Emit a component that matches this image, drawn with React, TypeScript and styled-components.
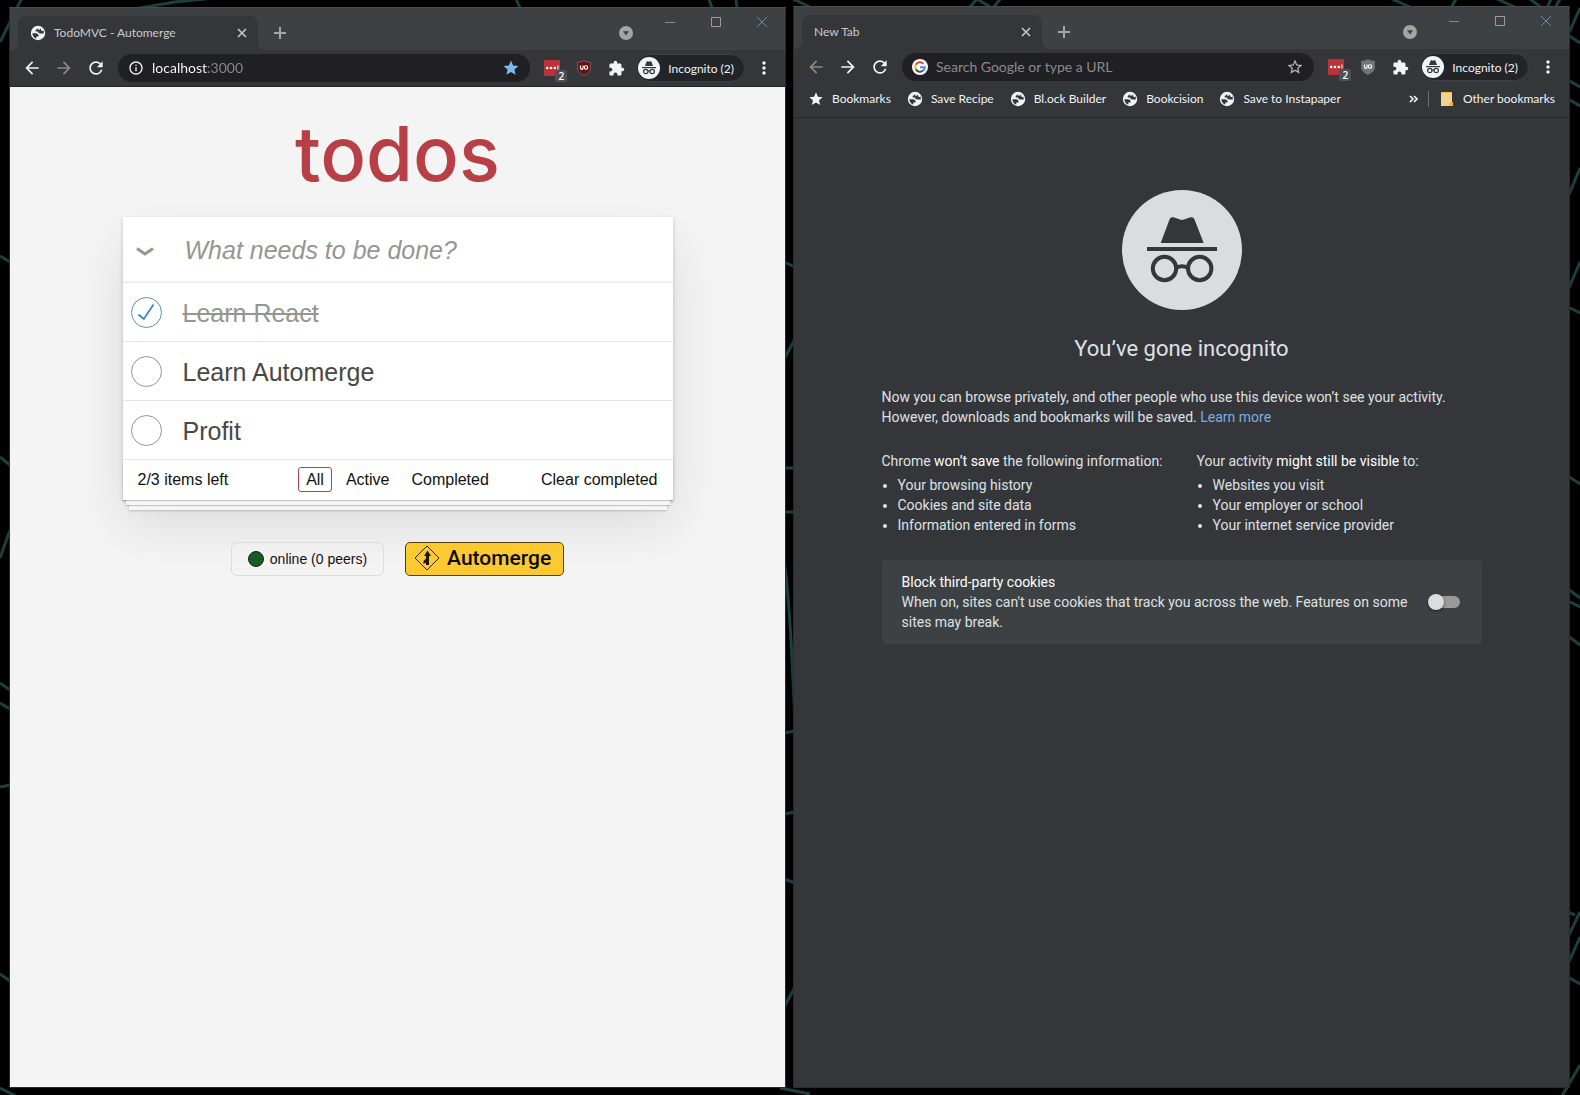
import React, { useState } from "react";
import styled, { createGlobalStyle, css } from "styled-components";
import {
  MdArrowBack,
  MdArrowForward,
  MdExtension,
  MdInfoOutline,
  MdMoreVert,
  MdRefresh,
  MdStar,
  MdStarBorder,
} from "react-icons/md";

const ui = `Lato, "Open Sans", sans-serif`;
const helvetica = `"Liberation Sans", Arial, sans-serif`;
const roboto = `Roboto, "Liberation Sans", sans-serif`;

const color = {
  strip: "#3d4144",
  bar: "#35363a",
  field: "#202024",
  chromeText: "#f1f3f4",
  red: "#b83f45",
  line: "#e6e6e6",
};

const GlobalStyle = createGlobalStyle`
  *, *::before, *::after { box-sizing: border-box; }
  body { margin: 0; background: #000; }
  button { border: 0; padding: 0; background: none; color: inherit; font: inherit; cursor: pointer; }
  h1, h2, p, ul { margin: 0; padding: 0; }
  a { color: inherit; text-decoration: none; }
`;

/* ---------- desktop and windows ---------- */

const Desktop = styled.div`
  position: relative;
  display: grid;
  grid-template-columns: 1fr 1fr;
  gap: 7px;
  min-height: 100vh;
  padding: 6px 10px 7px 9px;
  overflow: hidden;
`;

const Wallpaper = styled.svg`
  position: absolute;
  inset: 0;
  width: 100%;
  height: 100%;
  fill: none;
  stroke: #1d403f;
  stroke-width: 3;
`;

const Window = styled.section<{ $lowered?: boolean }>`
  position: relative;
  display: flex;
  flex-direction: column;
  min-width: 0;
  margin-top: ${(p) => (p.$lowered ? 1 : 0)}px;
  border: 1px solid #2a2a2c;
  border-top-color: #4b4b4b;
  background: ${color.bar};
  color: ${color.chromeText};
  font-family: ${ui};
  font-size: 12px;
`;

const TabStrip = styled.header`
  display: flex;
  align-items: flex-end;
  height: 42px;
  padding-left: 8px;
  background: ${color.strip};
`;

const Tab = styled.div`
  position: relative;
  display: flex;
  align-items: center;
  gap: 8px;
  width: 240px;
  height: 34px;
  padding: 0 8px 0 12px;
  border-radius: 8px 8px 0 0;
  background: ${color.bar};
  color: #c9ccd1;

  &::before,
  &::after {
    content: "";
    position: absolute;
    bottom: 0;
    width: 8px;
    height: 8px;
  }
  &::before {
    right: 100%;
    background: radial-gradient(circle at 0 0, transparent 8px, ${color.bar} 8px);
  }
  &::after {
    left: 100%;
    background: radial-gradient(circle at 100% 0, transparent 8px, ${color.bar} 8px);
  }
`;

const TabTitle = styled.span`
  flex: 1;
  padding-bottom: 1px;
`;

const TabClose = styled.button`
  display: grid;
  place-items: center;
  width: 16px;
  height: 16px;
`;

const StripButton = styled.button`
  display: grid;
  place-items: center;
  width: 28px;
  height: 34px;
  margin: 0 7px 0 8px;
  color: #a3a5a3;
`;

const Spacer = styled.div`
  flex: 1;
`;

const WindowControls = styled.div`
  display: flex;
  align-self: flex-start;
`;

const ControlButton = styled.button`
  display: grid;
  place-items: center;
  width: 46px;
  height: 28px;
`;

const Toolbar = styled.div<{ $ruled?: boolean }>`
  display: flex;
  align-items: center;
  height: ${(p) => (p.$ruled ? 37 : 36)}px;
  padding: 0 7px 0 6px;
  border-bottom: ${(p) => (p.$ruled ? "1px solid #242427" : "0")};
`;

const ToolButton = styled.button<{ $dim?: boolean }>`
  position: relative;
  display: grid;
  flex: none;
  place-items: center;
  width: 32px;
  height: 28px;
  color: ${(p) => (p.$dim ? "#8d8883" : color.chromeText)};
`;

const Omnibox = styled.label`
  display: flex;
  flex: 1;
  align-items: center;
  gap: 8px;
  height: 28px;
  min-width: 0;
  margin: 0 6px;
  padding: 0 10px;
  border-radius: 14px;
  background: ${color.field};
`;

const Address = styled.input<{ $hostWidth?: number }>`
  flex: 1;
  min-width: 0;
  height: 20px;
  padding: 0;
  border: 0;
  outline: 0;
  background: none;
  color: #fff;
  font: 14px/20px ${ui};

  &::placeholder {
    color: #8d8b89;
    opacity: 1;
  }

  ${(p) =>
    p.$hostWidth &&
    css`
      background: linear-gradient(90deg, #fff ${p.$hostWidth}px, #8d8b89 ${p.$hostWidth}px);
      background-clip: text;
      -webkit-text-fill-color: transparent;
    `}
`;

const FieldButton = styled.button<{ $on?: boolean }>`
  display: grid;
  place-items: center;
  color: ${(p) => (p.$on ? "#7db9ec" : "#b9babc")};
`;

const Badge = styled.span`
  position: absolute;
  right: 1px;
  bottom: 0;
  width: 12px;
  height: 12px;
  border-radius: 2px;
  background: #4d5057;
  color: #fff;
  font: 600 10px/12px "Open Sans", sans-serif;
  text-align: center;
`;

const Profile = styled.button`
  display: flex;
  flex: none;
  align-items: center;
  gap: 8px;
  height: 28px;
  margin: 0 5px 0 4px;
  padding: 0 10px 0 1px;
  border: 1px solid #3e3f42;
  border-radius: 14px;
  background: #232428;
  white-space: nowrap;
`;

const MenuButton = styled(ToolButton)`
  width: 28px;
`;

const BookmarkBar = styled.nav`
  display: flex;
  align-items: center;
  gap: 16px;
  height: 33px;
  padding: 0 14px 5px;
  border-bottom: 1px solid #28282b;
  white-space: nowrap;
`;

const Bookmark = styled.a`
  display: flex;
  align-items: center;
  gap: 8px;
`;

const BarEnd = styled.div`
  display: flex;
  align-items: center;
  gap: 10px;
  margin-left: auto;
`;

const Divider = styled.span`
  width: 1px;
  height: 16px;
  background: #6d6e71;
`;

/* ---------- todo page ---------- */

const TodoPage = styled.main`
  flex: 1;
  padding: 26px 16px 32px;
  background: #f4f4f4;
  color: #111;
  font-family: ${helvetica};
`;

const TodoTitle = styled.h1`
  margin-bottom: 24px;
  color: ${color.red};
  font-family: Inter, ${helvetica};
  font-size: 76px;
  font-weight: 500;
  line-height: 80px;
  text-align: center;
`;

const TodoCard = styled.section`
  max-width: 550px;
  margin: 0 auto;
  background: #fff;
  box-shadow: 0 2px 4px rgba(0, 0, 0, 0.2), 0 25px 50px rgba(0, 0, 0, 0.1);
`;

const rowText = css`
  font-family: ${helvetica};
  font-size: 25px;
  line-height: 30px;
`;

const NewTodo = styled.div`
  display: grid;
  grid-template-columns: 45px 1fr;
  align-items: center;
  height: 65px;
  box-shadow: inset 0 -2px 1px rgba(0, 0, 0, 0.03);
`;

const ToggleAll = styled.button`
  display: grid;
  place-items: center;
  height: 60px;
  padding-top: 4px;
`;

const NewTodoInput = styled.input`
  ${rowText}
  width: 100%;
  height: 64px;
  padding: 2px 17px 0;
  border: 0;
  outline: 0;
  background: none;

  &::placeholder {
    color: #969691;
    font-style: italic;
    opacity: 1;
  }
`;

const TodoList = styled.ul`
  list-style: none;
`;

const TodoItem = styled.li<{ $done: boolean }>`
  border-top: 1px solid ${color.line};
  color: ${(p) => (p.$done ? "#969691" : "#484844")};
  text-decoration: ${(p) => (p.$done ? "line-through" : "none")};
`;

const TodoLabel = styled.label`
  ${rowText}
  display: grid;
  grid-template-columns: 47px 1fr;
  align-items: center;
  height: 58px;
`;

const Tick = styled.span`
  display: grid;
  place-items: center;

  > * {
    grid-area: 1 / 1;
  }
`;

const TickBox = styled.input`
  appearance: none;
  width: 31px;
  height: 31px;
  margin: 0;
  border: 1px solid #949494;
  border-radius: 50%;

  &:checked {
    border-color: #5b8fb9;
  }
`;

const TodoText = styled.span`
  padding: 2px 13px 0;
`;

const TodoFooter = styled.footer`
  display: grid;
  grid-template-columns: 1fr auto 1fr;
  align-items: center;
  height: 41px;
  padding: 0 15px 2px;
  border-top: 1px solid ${color.line};
  font-size: 16px;
  line-height: 19px;
  box-shadow: 0 1px 1px rgba(0, 0, 0, 0.2), 0 8px 0 -3px #f6f6f6,
    0 9px 1px -3px rgba(0, 0, 0, 0.2), 0 16px 0 -6px #f6f6f6,
    0 17px 2px -6px rgba(0, 0, 0, 0.2);
`;

const Filters = styled.ul`
  display: flex;
  gap: 6px;
  list-style: none;
`;

const FilterLink = styled.a<{ $current: boolean }>`
  display: block;
  padding: 2px 7px;
  border: 1px solid ${(p) => (p.$current ? color.red : "transparent")};
  border-radius: 3px;
`;

const ClearButton = styled.button`
  justify-self: end;
`;

const StatusRow = styled.div`
  display: flex;
  justify-content: center;
  gap: 21px;
  margin-top: 42px;
`;

const Peers = styled.div`
  display: flex;
  align-items: center;
  gap: 6px;
  height: 34px;
  padding: 0 16px;
  border: 1px solid #dcdcdc;
  border-radius: 6px;
  font-size: 14px;
`;

const Dot = styled.span`
  width: 16px;
  height: 16px;
  border: 1px solid #0d2512;
  border-radius: 50%;
  background: #1a5a27;
`;

const AutomergeLink = styled.a`
  display: flex;
  align-items: center;
  gap: 7px;
  height: 34px;
  padding: 0 12px 2px 8px;
  border: 1px solid #53400f;
  border-radius: 5px;
  background: #fdc930;
  color: #0c0a05;
  font: 500 21px/30px ${roboto};
`;

/* ---------- incognito page ---------- */

const IncognitoPage = styled.main`
  flex: 1;
  padding: 72px 24px 32px;
  background: #35363a;
  color: #dfe1e5;
  font: 14px/20px ${roboto};
`;

const IncognitoBody = styled.div`
  display: flex;
  flex-direction: column;
  max-width: 600px;
  margin: 0 auto;
`;

const HeroIcon = styled.svg`
  align-self: center;
  width: 120px;
  height: 120px;
`;

const IncognitoTitle = styled.h1`
  margin: 25px 0 24px;
  font-size: 22px;
  font-weight: 400;
  line-height: 28px;
  text-align: center;
`;

const LearnMore = styled.a`
  color: #7ab0e6;
`;

const Columns = styled.div`
  display: flex;
  flex-wrap: wrap;
  gap: 16px 34px;
  margin: 24px 0 25px;
`;

const Strong = styled.em`
  color: #fff;
  font-style: normal;
`;

const Facts = styled.ul`
  margin-top: 4px;
  padding-left: 16px;
`;

const CookieCard = styled.label`
  display: flex;
  align-items: center;
  gap: 16px;
  padding: 12px 22px 12px 20px;
  border-radius: 4px;
  background: #3d4144;
`;

const CookieText = styled.span`
  display: block;
  flex: 1;
`;

const CookieTitle = styled.span`
  display: block;
  color: #fff;
`;

const Switch = styled.input`
  appearance: none;
  display: flex;
  flex: none;
  align-items: center;
  width: 32px;
  height: 12px;
  margin: 0;
  border-radius: 6px;
  background: linear-gradient(#9a9b98, #9a9b98) right / 28px 12px no-repeat;

  &::before {
    content: "";
    width: 16px;
    height: 16px;
    border-radius: 50%;
    background: #dadce0;
    box-shadow: 0 1px 3px rgba(0, 0, 0, 0.5);
  }
  &:checked::before {
    margin-left: auto;
  }
`;

/* ---------- drawings ---------- */

const GlobeIcon = () => (
  <svg width="16" height="16" viewBox="0 0 16 16" aria-hidden="true">
    <circle cx="8" cy="8" r="7.200" fill="#f1f3f4" />
    <path
      d="M2.300 8.300H5.500c2.300 0 3.300 1.100 3.100 3.300H6.300v2l-1.400-.6A6 6 0 0 1 2.300 8.300z"
      fill="#35363a"
    />
    <path
      d="M8.300 2.200 7.600 4C6.200 4 5.400 5 5.700 6.600h2.500c0 1.200.7 1.900 2.100 1.900h3.500A5.900 5.900 0 0 0 11.500 3.200L10 3.500 9.600 5 8 4.600z"
      fill="#35363a"
    />
    <path d="M9.500 2.300c.3 1.300 1.500 1.200 1.500 2.400s1.200 1.200 2.500 1.400l-.5-1.800-1.500-1.600z" fill="#f1f3f4" />
  </svg>
);

const CloseIcon = () => (
  <svg width="10" height="10" viewBox="0 0 10 10" stroke="#c6c8cb" strokeWidth="1.600" aria-hidden="true">
    <path d="M1 1l8 8M9 1l-8 8" />
  </svg>
);

const GoogleIcon = () => (
  <svg width="16" height="16" viewBox="0 0 16 16" fill="none" strokeWidth="2" aria-hidden="true">
    <circle cx="8" cy="8" r="8" fill="#fff" />
    <path d="M11.400 4.700A4.800 4.800 0 0 0 3.800 5.700" stroke="#dc4437" />
    <path d="M3.800 5.700a4.800 4.800 0 0 0 0 4.600" stroke="#f2b61d" />
    <path d="M3.800 10.300a4.800 4.800 0 0 0 7.300 1.300" stroke="#3f5560" />
    <path d="M8 8.200h4.800a4.800 4.800 0 0 1-1.700 3.400" stroke="#4192d9" />
  </svg>
);

const PasswordIcon = () => (
  <svg width="16" height="16" viewBox="0 0 16 16" aria-hidden="true">
    <rect width="16" height="16" rx="1" fill="#b93338" />
    <g fill="#fff">
      <circle cx="3.200" cy="8" r="1.300" />
      <circle cx="7" cy="8" r="1.300" />
      <circle cx="10.800" cy="8" r="1.300" />
      <path d="M13.400 5.400h1v4h-1z" />
    </g>
  </svg>
);

const ShieldIcon = ({ fill }: { fill: string }) => (
  <svg width="16" height="16" viewBox="0 0 16 16" aria-hidden="true">
    <path
      d="M8 .5c2 1.100 4 1.600 6.500 1.700V8c0 3.800-2.800 5.900-6.500 7.500C4.300 13.900 1.500 11.800 1.500 8V2.200C4 2.100 6 1.600 8 .5z"
      fill={fill}
      stroke="#7e7673"
      strokeWidth=".7"
    />
    <path d="M4.500 5.500v2.600a1.300 1.300 0 0 0 2.600 0V5.500" fill="none" stroke="#fff" strokeWidth="1.100" />
    <circle cx="10" cy="7.500" r="1.700" fill="none" stroke="#fff" strokeWidth="1.100" />
  </svg>
);

const SpyShapes = () => (
  <>
    <circle cx="60" cy="60" r="60" fill="#dadce0" />
    <g fill="#35363a">
      <path d="M38.700 53 47.500 29.500Q48.500 26.600 51.500 27.300L58 29.500Q60 30.300 62 29.500L68.500 27.300Q71.500 26.600 72.500 29.500L81.700 53z" />
      <path d="M25 57h70v4H25z" />
    </g>
    <g fill="none" stroke="#35363a" strokeWidth="4">
      <circle cx="42.500" cy="78.500" r="11.700" />
      <circle cx="77.700" cy="78.500" r="11.700" />
      <path d="M54 78q6-3.500 12 0" />
    </g>
  </>
);

const SmallSpyIcon = () => (
  <svg width="22" height="22" viewBox="0 0 22 22" aria-hidden="true">
    <circle cx="11" cy="11" r="11" fill="#f1f3f4" />
    <path d="M7 9 8.500 4.800q.4-.7 1.200-.5l1.300.4 1.300-.4q.8-.2 1.200.5L15 9z" fill="#35363a" />
    <path d="M4 10h14v1.200H4z" fill="#35363a" />
    <g fill="none" stroke="#35363a" strokeWidth="1.200">
      <circle cx="7.800" cy="14.500" r="2.200" />
      <circle cx="14.200" cy="14.500" r="2.200" />
      <path d="M10 14.300q1-.7 2 0" />
    </g>
  </svg>
);

const MergeIcon = () => (
  <svg width="26" height="26" viewBox="0 0 26 26" aria-hidden="true">
    <path d="M13 1 25 13 13 25 1 13z" fill="none" stroke="#2b2209" strokeWidth="1" />
    <path d="M13.500 5.500 17 11h-2v9h-3v-2.500L9.500 19v-3l2.500-2.500V11h-2z" fill="#1c1608" />
  </svg>
);

/* ---------- browser frame ---------- */

type BrowserProps = {
  title: string;
  favicon?: boolean;
  lowered?: boolean;
  ruled?: boolean;
  atStart?: boolean;
  starred?: boolean;
  leading: React.ReactNode;
  url?: string;
  hostWidth?: number;
  shield: string;
  children: React.ReactNode;
};

const Browser = (p: BrowserProps) => {
  const [url, setUrl] = useState(p.url ?? "");
  return (
    <Window $lowered={p.lowered} aria-label={p.title}>
      <TabStrip>
        <Tab>
          {p.favicon && <GlobeIcon />}
          <TabTitle>{p.title}</TabTitle>
          <TabClose aria-label="Close tab">
            <CloseIcon />
          </TabClose>
        </Tab>
        <StripButton aria-label="New tab">
          <svg width="12" height="12" viewBox="0 0 12 12" stroke="currentColor" strokeWidth="2">
            <path d="M6 0v12M0 6h12" />
          </svg>
        </StripButton>
        <Spacer />
        <StripButton aria-label="Search tabs">
          <svg width="14" height="14" viewBox="0 0 14 14">
            <circle cx="7" cy="7" r="7" fill="currentColor" />
            <path d="M4 5.300h6L7 9.500z" fill={color.strip} />
          </svg>
        </StripButton>
        <WindowControls>
          <ControlButton aria-label="Minimize">
            <svg width="10" height="10" stroke="#8f8a82">
              <path d="M0 5.500h10" />
            </svg>
          </ControlButton>
          <ControlButton aria-label="Maximize">
            <svg width="10" height="10" stroke="#a39b90" fill="none">
              <path d="M.5.500h9v9h-9z" />
            </svg>
          </ControlButton>
          <ControlButton aria-label="Close">
            <svg width="10" height="10" stroke="#74879b">
              <path d="M0 0l10 10M10 0L0 10" />
            </svg>
          </ControlButton>
        </WindowControls>
      </TabStrip>
      <Toolbar $ruled={p.ruled}>
        <ToolButton aria-label="Back" $dim={p.atStart}>
          <MdArrowBack size={20} />
        </ToolButton>
        <ToolButton aria-label="Forward" $dim={!p.atStart}>
          <MdArrowForward size={20} />
        </ToolButton>
        <ToolButton aria-label="Reload">
          <MdRefresh size={20} />
        </ToolButton>
        <Omnibox>
          {p.leading}
          <Address
            aria-label="Address"
            placeholder="Search Google or type a URL"
            value={url}
            $hostWidth={p.hostWidth}
            onChange={(e) => setUrl(e.target.value)}
          />
          <FieldButton aria-label="Bookmark this page" $on={p.starred}>
            {p.starred ? <MdStar size={18} /> : <MdStarBorder size={18} />}
          </FieldButton>
        </Omnibox>
        <ToolButton aria-label="Password manager">
          <PasswordIcon />
          <Badge>2</Badge>
        </ToolButton>
        <ToolButton aria-label="Content blocker">
          <ShieldIcon fill={p.shield} />
        </ToolButton>
        <ToolButton aria-label="Extensions">
          <MdExtension size={17} />
        </ToolButton>
        <Profile>
          <SmallSpyIcon />
          Incognito (2)
        </Profile>
        <MenuButton aria-label="Menu">
          <MdMoreVert size={20} />
        </MenuButton>
      </Toolbar>
      {p.children}
    </Window>
  );
};

/* ---------- pages ---------- */

const filters = ["All", "Active", "Completed"];

const Todos = () => {
  const [items, setItems] = useState([
    { title: "Learn React", done: true },
    { title: "Learn Automerge", done: false },
    { title: "Profit", done: false },
  ]);
  const [filter, setFilter] = useState("All");
  const shown = items.filter((t) => filter === "All" || t.done === (filter === "Completed"));
  const toggle = (title: string) =>
    setItems(items.map((t) => (t.title === title ? { ...t, done: !t.done } : t)));

  return (
    <TodoPage>
      <TodoTitle>todos</TodoTitle>
      <TodoCard>
        <NewTodo>
          <ToggleAll
            aria-label="Mark all as complete"
            onClick={() => setItems(items.map((t) => ({ ...t, done: true })))}
          >
            <svg width="18" height="10" viewBox="0 0 18 10" fill="none" stroke="#969691" strokeWidth="3">
              <path d="M1 1.500 9 7 17 1.500" />
            </svg>
          </ToggleAll>
          <NewTodoInput aria-label="New todo" placeholder="What needs to be done?" />
        </NewTodo>
        <TodoList>
          {shown.map((t) => (
            <TodoItem key={t.title} $done={t.done}>
              <TodoLabel>
                <Tick>
                  <TickBox type="checkbox" checked={t.done} onChange={() => toggle(t.title)} />
                  {t.done && (
                    <svg width="18" height="18" viewBox="0 0 18 18" fill="none" stroke="#3d85bd" strokeWidth="1.800">
                      <path d="M1.500 11.500 6.800 16 16.500 1.500" />
                    </svg>
                  )}
                </Tick>
                <TodoText>{t.title}</TodoText>
              </TodoLabel>
            </TodoItem>
          ))}
        </TodoList>
        <TodoFooter>
          <span>
            {items.filter((t) => !t.done).length}/{items.length} items left
          </span>
          <Filters>
            {filters.map((f) => (
              <li key={f}>
                <FilterLink href={`#${f}`} $current={f === filter} onClick={() => setFilter(f)}>
                  {f}
                </FilterLink>
              </li>
            ))}
          </Filters>
          <ClearButton onClick={() => setItems(items.filter((t) => !t.done))}>Clear completed</ClearButton>
        </TodoFooter>
      </TodoCard>
      <StatusRow>
        <Peers>
          <Dot />
          online (0 peers)
        </Peers>
        <AutomergeLink href="#automerge">
          <MergeIcon />
          Automerge
        </AutomergeLink>
      </StatusRow>
    </TodoPage>
  );
};

const bookmarks = ["Save Recipe", "Bl.ock Builder", "Bookcision", "Save to Instapaper"];

const Bookmarks = () => (
  <BookmarkBar aria-label="Bookmarks">
    <Bookmark href="#bookmarks">
      <MdStar size={16} />
      Bookmarks
    </Bookmark>
    {bookmarks.map((b) => (
      <Bookmark key={b} href="#bookmark">
        <GlobeIcon />
        {b}
      </Bookmark>
    ))}
    <BarEnd>
      <button aria-label="More bookmarks">
        <svg width="9" height="8" viewBox="0 0 9 8" fill="none" stroke="#f1f3f4" strokeWidth="1.600">
          <path d="M1 1l3 3-3 3M5 1l3 3-3 3" />
        </svg>
      </button>
      <Divider />
      <Bookmark href="#other">
        <svg width="16" height="16" viewBox="0 0 16 16">
          <path d="M2 1h11v10h1v4H2z" fill="#f3d28f" />
          <path d="M2 1h11v1H2zM10 14l1-3h3v4h-4z" fill="#f0b73c" />
        </svg>
        Other bookmarks
      </Bookmark>
    </BarEnd>
  </BookmarkBar>
);

const Incognito = () => {
  const [block, setBlock] = useState(false);
  return (
    <IncognitoPage>
      <IncognitoBody>
        <HeroIcon viewBox="0 0 120 120" aria-hidden="true">
          <SpyShapes />
        </HeroIcon>
        <IncognitoTitle>You’ve gone incognito</IncognitoTitle>
        <p>
          Now you can browse privately, and other people who use this device won’t see your activity.
          However, downloads and bookmarks will be saved. <LearnMore href="#learn">Learn more</LearnMore>
        </p>
        <Columns>
          <div>
            Chrome <Strong>won’t save</Strong> the following information:
            <Facts>
              <li>Your browsing history</li>
              <li>Cookies and site data</li>
              <li>Information entered in forms</li>
            </Facts>
          </div>
          <div>
            Your activity <Strong>might still be visible</Strong> to:
            <Facts>
              <li>Websites you visit</li>
              <li>Your employer or school</li>
              <li>Your internet service provider</li>
            </Facts>
          </div>
        </Columns>
        <CookieCard>
          <CookieText>
            <CookieTitle>Block third-party cookies</CookieTitle>
            When on, sites can't use cookies that track you across the web. Features on some sites may break.
          </CookieText>
          <Switch type="checkbox" role="switch" checked={block} onChange={() => setBlock(!block)} />
        </CookieCard>
      </IncognitoBody>
    </IncognitoPage>
  );
};

export default function App() {
  return (
    <Desktop>
      <GlobalStyle />
      <Wallpaper viewBox="0 0 1580 1095" preserveAspectRatio="none" aria-hidden="true">
        <path d="M0 42 10 22 22-2M140 8 175 2 215-2M516-1 520 8M709-1 712 8M736-1 737 8M787-4 812 8M969 8 977-1 992 8M993 8 1001-2M1392-1 1412 8M1456-1 1451 8M1497-1 1517 8M1530-1 1542 8M1551-1 1547 8M1560-1 1555 8" />
        <path d="M0 256 10 262M0 457 10 465M0 558 10 530M0 683 10 690M0 703 10 709M0 787 10 785M0 974 10 981M0 1088 16 1096" />
        <path d="M784 262 795 267M784 359 795 339M784 468H795M784 512H795M784 560Q790 600 795 724M784 733 795 731M784 814 795 812M784 879 795 883M784 1007 795 987M780 1088 810 1094" />
        <path d="M1568 35 1580 8M1568 35 1580 43M1568 80 1580 87M1568 99 1580 106M1568 197 1580 168M1568 290 1580 262M1568 307 1580 313M1568 476 1580 484M1568 589 1580 598M1568 601 1580 607M1568 636 1580 645M1568 912 1575 915M1568 937 1580 912M1568 964 1580 937M1568 977 1580 984M1562 1096 1580 1065" />
      </Wallpaper>
      <Browser
        title="TodoMVC - Automerge"
        favicon
        lowered
        ruled
        starred
        leading={<MdInfoOutline size={16} />}
        url="localhost:3000"
        hostWidth={56}
        shield="#641316"
      >
        <Todos />
      </Browser>
      <Browser title="New Tab" atStart leading={<GoogleIcon />} shield="#6f7477">
        <Bookmarks />
        <Incognito />
      </Browser>
    </Desktop>
  );
}
